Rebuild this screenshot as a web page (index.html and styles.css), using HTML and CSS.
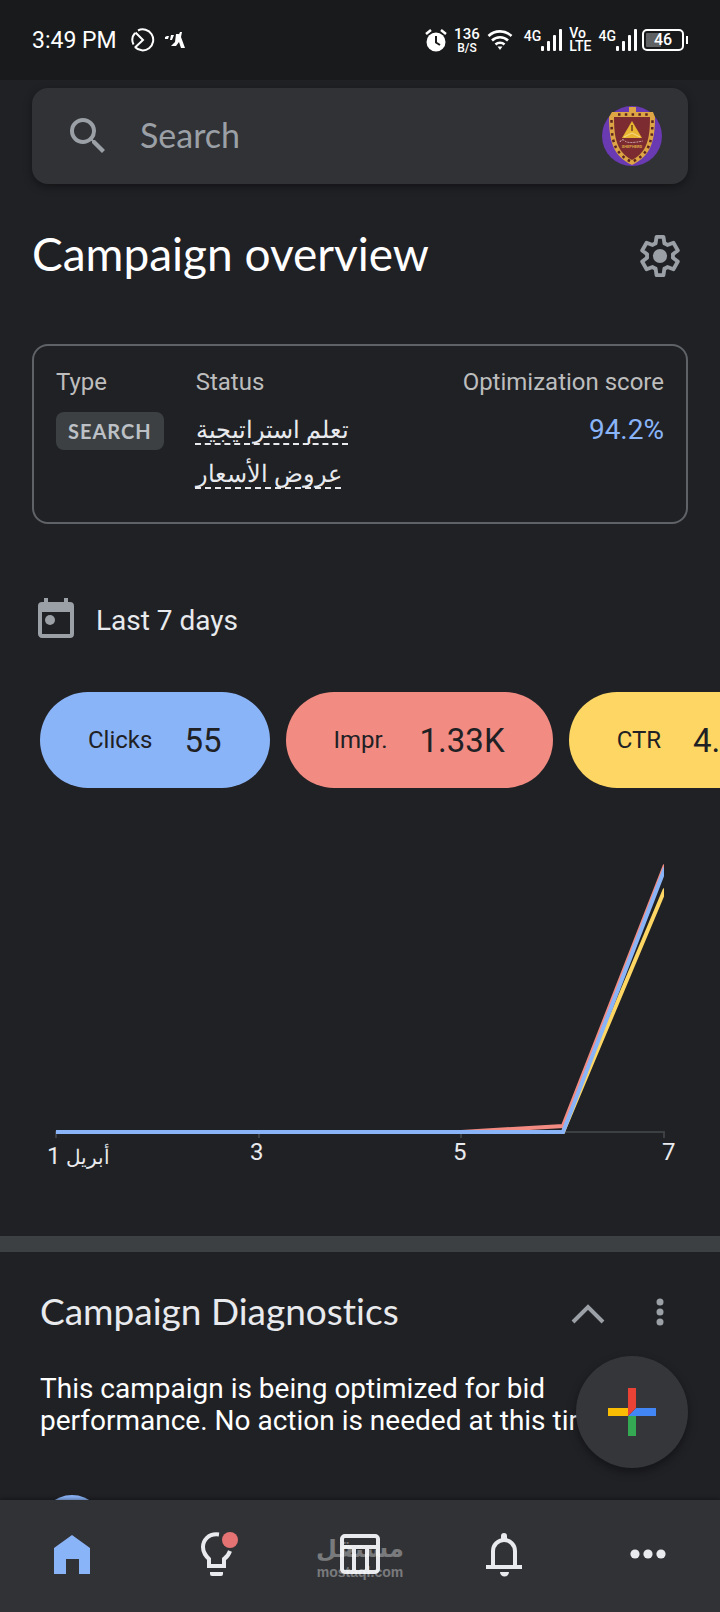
FILE: index.html
```html
<!DOCTYPE html>
<html lang="en">
<head>
    <meta charset="UTF-8">
    <meta name="viewport" content="width=device-width, initial-scale=1.0">
    <title>Campaign overview</title>
    <link rel="stylesheet" href="styles.css">
</head>
<body>

    <!-- Phone Status Bar -->
    <div class="status-bar">
        <span class="time">3:49 PM</span>
        <svg class="app-icon" width="24" height="24" viewBox="0 0 24 24" fill="none" stroke="#fff" stroke-width="2">
            <path d="M7 2.500a10.500 10.500 0 1 1-3 16.500M4 5a10.500 10.500 0 0 0-1.500 11.500M4.500 4.500l7.500 7.500-8 7.500"/>
        </svg>
        <svg width="20" height="16" viewBox="0 0 20 16" fill="#fff">
            <path d="M0 5l2-1h2L3 7H0zM6 3h3L7 8H5zM11 2h3l-4 12H6l4-4zM15 0h2l-1 5 4 11h-4l-2-6-3 4H9z"/>
        </svg>

        <div class="status-right">
            <svg width="22" height="24" viewBox="0 0 22 24">
                <circle cx="11" cy="14" r="9.500" fill="#fff"/>
                <path d="M1 6l5-4M21 6l-5-4" stroke="#fff" stroke-width="2.500"/>
                <path d="M11 8v6.500l4 2.500" stroke="#191a1c" stroke-width="2" fill="none"/>
            </svg>
            <div class="stack speed"><b>136</b><small>B/S</small></div>
            <svg class="wifi" width="26" height="22" viewBox="0 0 26 22" fill="none" stroke="#fff" stroke-width="2.600">
                <path d="M1.500 7a16.500 16.500 0 0 1 23 0M5 11.500a11.500 11.500 0 0 1 16 0M8.500 15.500a6.500 6.500 0 0 1 9 0"/>
                <path d="M10.500 17.500h5L13 21z" fill="#fff" stroke="none"/>
            </svg>
            <div class="signal">
                <span>4G</span>
                <svg width="21" height="22" viewBox="0 0 21 22" fill="#fff">
                    <rect x="0" y="17" width="3" height="5" rx="1"/><rect x="6" y="12" width="3" height="10" rx="1"/>
                    <rect x="12" y="6" width="3" height="16" rx="1"/><rect x="18" y="0" width="3" height="22" rx="1"/>
                </svg>
            </div>
            <div class="stack volte"><span>Vo</span><span>LTE</span></div>
            <div class="signal">
                <span>4G</span>
                <svg width="21" height="22" viewBox="0 0 21 22" fill="#fff">
                    <rect x="0" y="17" width="3" height="5" rx="1"/><rect x="6" y="12" width="3" height="10" rx="1"/>
                    <rect x="12" y="6" width="3" height="16" rx="1"/><rect x="18" y="0" width="3" height="22" rx="1"/>
                </svg>
            </div>
            <div class="battery">46</div>
        </div>
    </div>

    <main>
        <!-- Search -->
        <form class="search">
            <svg width="48" height="48" viewBox="0 0 24 24" fill="#9aa0a6">
                <path d="M15.500 14h-.79l-.28-.27A6.470 6.470 0 0 0 16 9.500 6.500 6.500 0 1 0 9.500 16c1.610 0 3.090-.59 4.230-1.570l.27.28v.79l5 4.990L20.490 19l-4.990-5zm-6 0C7.010 14 5 11.990 5 9.500S7.010 5 9.500 5 14 7.010 14 9.500 11.990 14 9.500 14z"/>
            </svg>
            <input type="text" placeholder="Search" aria-label="Search">
            <button type="button" class="avatar" aria-label="Account">
                <svg width="60" height="60" viewBox="0 0 60 60">
                    <circle cx="30" cy="30" r="30" fill="#6a3ab2"/>
                    <path d="M27 1h7v5h17l2 5c0 24-4 39-23 48C11 50 7 35 7 11l3-5h17z" fill="#dda544"/>
                    <path d="M12 11h36c0 22-3 35-18 43C15 46 12 33 12 11z" fill="#7c2c30"/>
                    <path d="M9.500 14c0 21 3 34 20.500 42 17.500-8 20.500-21 20.500-42" fill="none" stroke="#5b2320" stroke-width="2.500" stroke-dasharray="2.500 4"/>
                    <path d="M16 8.500h30" stroke="#5b2320" stroke-width="2.500" stroke-dasharray="2.500 4.300"/>
                    <path d="M30 15l10 17H20z" fill="#e9b632"/>
                    <path d="M30 19v6" stroke="#8a5a20" stroke-width="2"/>
                    <path d="M22 31l8-4 8 4" fill="none" stroke="#f5dc8c"/>
                    <path d="M18 36q2-4 5-1t18 0" fill="none" stroke="#d9b3bd" stroke-dasharray="2 1"/>
                    <text x="30" y="42" class="crest-text">SHEPHERD</text>
                </svg>
            </button>
        </form>

        <div class="title-row">
            <h1>Campaign overview</h1>
            <button type="button" aria-label="Settings">
                <svg width="46" height="46" viewBox="0 0 24 24" fill="none" stroke="#9aa0a6" stroke-width="2">
                    <path stroke-linejoin="round" d="M18.700 12.900c.1-.6.1-1.200 0-1.800l2.600-2-2.300-4-3.100 1.200c-.5-.4-1-.7-1.600-.9L13.800 2h-3.600l-.5 3.400c-.6.2-1.100.5-1.600.9L5 5.100l-2.300 4 2.600 2c-.1.6-.1 1.200 0 1.800l-2.600 2 2.300 4 3.100-1.200c.5.4 1 .7 1.600.9l.5 3.400h3.600l.5-3.400c.6-.2 1.100-.5 1.600-.9l3.100 1.200 2.300-4z"/>
                    <circle cx="12" cy="12" r="3.700" fill="#9aa0a6" stroke="none"/>
                </svg>
            </button>
        </div>

        <!-- Campaign Info -->
        <section class="info-card">
            <div>
                <h3>Type</h3>
                <span class="chip">SEARCH</span>
            </div>
            <div class="status-col">
                <h3>Status</h3>
                <a href="#" lang="ar">تعلم استراتيجية عروض الأسعار</a>
            </div>
            <div class="score-col">
                <h3>Optimization score</h3>
                <span class="score">94.2%</span>
            </div>
        </section>

        <button type="button" class="date-range">
            <svg width="48" height="48" viewBox="0 0 24 24" fill="#9aa0a6">
                <path fill-rule="evenodd" d="M19 4h-1V2h-2v2H8V2H6v2H5a2 2 0 0 0-2 2v14c0 1.100.9 2 2 2h14a2 2 0 0 0 2-2V6a2 2 0 0 0-2-2zm0 16H5V9h14z"/>
                <circle cx="9" cy="13" r="2.500"/>
            </svg>
            Last 7 days
        </button>

        <!-- Metrics -->
        <div class="metrics">
            <button type="button" class="metric clicks">Clicks <b>55</b></button>
            <button type="button" class="metric impr">Impr. <b>1.33K</b></button>
            <button type="button" class="metric ctr">CTR <b>4.14%</b></button>
        </div>

        <svg class="chart" viewBox="0 0 720 320" role="img" aria-label="Clicks, impressions and CTR by day">
            <defs><clipPath id="plot"><rect x="56" y="0" width="608" height="280"/></clipPath></defs>
            <path d="M56 278v-6h608v6M259 272v6M461 272v6" fill="none" stroke="#3c4043" stroke-width="2"/>
            <g fill="none" stroke-width="4" clip-path="url(#plot)">
                <path d="M56 272H563L665 29" stroke="#fdd663"/>
                <path d="M56 272H461L563 266L665 5" stroke="#f28b82"/>
                <path d="M56 272H563L665 8" stroke="#8ab4f8"/>
            </g>
            <g class="axis">
                <text x="47" y="304">1 <tspan class="month">أبريل</tspan></text>
                <text x="250" y="300">3</text>
                <text x="453" y="300">5</text>
                <text x="662" y="300">7</text>
            </g>
        </svg>

        <!-- Diagnostics -->
        <section class="diagnostics">
            <div class="diag-head">
                <h2>Campaign Diagnostics</h2>
                <button type="button" aria-label="Collapse">
                    <svg width="48" height="48" viewBox="0 0 48 48" fill="none" stroke="#9aa0a6" stroke-width="4"><path d="M9 34l15-15 15 15"/></svg>
                </button>
                <button type="button" aria-label="More">
                    <svg width="48" height="48" viewBox="0 0 48 48" fill="#9aa0a6"><circle cx="24" cy="14" r="3.500"/><circle cx="24" cy="24" r="3.500"/><circle cx="24" cy="34" r="3.500"/></svg>
                </button>
            </div>
            <p>This campaign is being optimized for bid performance. No action is needed at this time.</p>
            <div class="step"></div>
        </section>
    </main>

    <button type="button" class="fab" aria-label="Create">
        <svg width="48" height="48" viewBox="0 0 48 48">
            <path d="M0 20h20v8H0z" fill="#fbbc04"/>
            <path d="M20 28h8v20h-8z" fill="#34a853"/>
            <path d="M28 20h20v8H20z" fill="#4285f4"/>
            <path d="M20 0h8v20l-8 8z" fill="#ea4335"/>
        </svg>
    </button>

    <!-- Bottom Navigation -->
    <nav>
        <a href="#" aria-label="Overview">
            <svg width="48" height="48" viewBox="0 0 48 48"><path d="M24 5l18 13v26H31V29H18v15H6V18z" fill="#8ab4f8"/></svg>
        </a>
        <a href="#" aria-label="Recommendations">
            <svg width="48" height="48" viewBox="0 0 48 48" fill="none" stroke="#e8eaed" stroke-width="4">
                <path d="M27 4.500C16 3 11 11 11 17c0 6 3 9 6 12v7h15v-7c3-2 5-5 6-8"/>
                <path d="M18 42h13v2a2 2 0 0 1-2 2h-9a2 2 0 0 1-2-2z" fill="#e8eaed" stroke="none"/>
                <circle cx="38" cy="10" r="8" fill="#e57373" stroke="none"/>
            </svg>
        </a>
        <a href="#" aria-label="Campaigns">
            <svg width="48" height="48" viewBox="0 0 48 48" fill="none" stroke="#e8eaed" stroke-width="4">
                <rect x="6" y="6" width="36" height="36" rx="3"/><path d="M6 17h36M18 17v25M31 17v25"/>
            </svg>
        </a>
        <a href="#" aria-label="Notifications">
            <svg width="48" height="48" viewBox="0 0 48 48" fill="none" stroke="#e8eaed" stroke-width="4">
                <path d="M13 37V21a11 11 0 0 1 22 0v16M6 37h36"/>
                <path d="M20 42h9a4.500 4.500 0 0 1-9 0zM21 9V6a3 3 0 0 1 6 0v3z" fill="#e8eaed" stroke="none"/>
            </svg>
        </a>
        <a href="#" aria-label="More">
            <svg width="48" height="48" viewBox="0 0 48 48" fill="#e8eaed"><circle cx="11" cy="24" r="4.600"/><circle cx="24" cy="24" r="4.600"/><circle cx="37" cy="24" r="4.600"/></svg>
        </a>
        <div class="watermark">
            <span lang="ar">مستقل</span>
            <span>mostaql.com</span>
        </div>
    </nav>

</body>
</html>
```
FILE: styles.css
```css
/* General Styles */
* { box-sizing: border-box; }
body { height: 100vh; margin: 0; display: flex; flex-direction: column; position: relative; overflow: hidden;
       background: #202125; color: #e8eaed; font-family: Roboto, "Noto Sans", sans-serif; }
button { padding: 0; border: none; background: none; color: inherit; font: inherit; cursor: pointer; }
svg { display: block; flex-shrink: 0; }
h1, h2, h3, p { margin: 0; font-weight: 400; }
h1, h2 { font-family: Lato, sans-serif; font-variant-ligatures: none; }

/* Status bar */
.status-bar { flex-shrink: 0; height: 80px; padding: 0 32px; display: flex; align-items: center; background: #191a1c; color: #fff; }
.time { font-size: 23px; line-height: 28px; padding-top: 2px; }
.app-icon { margin: 0 10px 0 14px; }
.status-right { display: flex; align-items: center; gap: 7px; margin-left: auto; }
.stack { display: flex; flex-direction: column; align-items: center; font-weight: 500; }
.speed b { font-size: 15px; line-height: 15px; font-weight: 500; }
.speed small { font-size: 12px; line-height: 12px; }
.volte { font-size: 14px; line-height: 13px; align-items: flex-start; }
.wifi { margin-right: 4px; }
.signal { display: flex; align-items: flex-start; font-size: 14px; line-height: 14px; font-weight: 500; }
.battery { position: relative; width: 42px; height: 22px; border: 2px solid #fff; border-radius: 5px; margin-right: 4px; margin-left: -2px;
           background: linear-gradient(90deg, #606163 45%, transparent 45%) content-box; padding: 2px;
           font-size: 16px; line-height: 14px; font-weight: 500; text-align: center; }
.battery::after { content: ""; position: absolute; right: -6px; top: 5px; width: 2px; height: 8px; background: #fff; }

/* Search */
main { flex: 1; min-height: 0; overflow: hidden; padding-top: 8px; }
.search { display: flex; align-items: center; height: 96px; margin: 0 32px; padding: 0 26px 0 32px; border-radius: 16px;
          background: #313236; box-shadow: 0 3px 8px rgba(0, 0, 0, 0.4); }
.search input { flex: 1; min-width: 0; margin-left: 28px; padding: 0 0 4px; border: none; outline: none; background: none;
                color: #e8eaed; font-family: Lato, sans-serif; font-size: 34px; }
.search input::placeholder { color: #9aa0a6; opacity: 1; }
.crest-text { font: bold 4px Roboto, sans-serif; fill: #dda544; text-anchor: middle; }

/* Title */
.title-row { display: flex; align-items: center; justify-content: space-between; margin: 40px 37px 56px 32px; height: 64px; }
h1 { font-size: 46px; line-height: 56px; padding-bottom: 4px; color: #fff; }

/* Info card */
.info-card { display: flex; height: 180px; margin: 0 32px; padding: 20px 22px; border: 2px solid #5f6368; border-radius: 16px; }
h3 { font-size: 24px; line-height: 32px; color: #bdbdbd; }
.chip { display: block; margin-top: 14px; padding: 0 12px; border-radius: 8px; background: #3c4043; color: #bdc1c6;
        font: bold 20px/38px Lato, sans-serif; letter-spacing: 1px; }
.status-col { width: 200px; margin-left: 32px; }
.status-col a { display: block; margin-top: 10px; color: #e8eaed; font-size: 24px; line-height: 44px;
                text-decoration: underline dashed 2px; text-underline-offset: 5px; text-decoration-skip-ink: none; }
.score-col { margin-left: auto; text-align: right; }
.score { display: block; margin-top: 16px; font-size: 28px; line-height: 32px; color: #8ab4f8; }

/* Metrics */
.date-range { display: flex; align-items: flex-end; gap: 16px; margin: 70px 32px 50px; font-size: 28px; line-height: 42px; }
.metrics { display: flex; gap: 16px; padding-left: 40px; overflow: hidden; }
.metric { display: flex; flex-shrink: 0; align-items: center; gap: 32px; height: 96px; padding: 0 48px; border-radius: 48px;
          color: #202124; font-size: 24px; }
.metric b { font-size: 33px; font-weight: 400; }
.clicks { background: #8ab4f8; }
.impr { background: #f28b82; }
.ctr { background: #fdd663; }

/* Chart */
.chart { width: 100%; margin-top: 72px; }
.axis { font-size: 24px; fill: #e8eaed; }
.month { font-size: 20px; }

/* Diagnostics */
.diagnostics { margin-top: 56px; padding: 36px 36px 0 40px; border-top: 16px solid #3c4043; }
.diag-head { display: flex; align-items: center; gap: 24px; height: 48px; }
h2 { flex: 1; font-size: 37px; line-height: 44px; padding-bottom: 2px; }
.diagnostics p { margin-top: 37px; font-size: 28px; line-height: 32px; color: #fff; }
.step { width: 64px; height: 64px; margin-top: 58px; border-radius: 50%; background: #8ab4f8; }

/* Floating button */
.fab { position: absolute; right: 32px; bottom: 144px; display: flex; align-items: center; justify-content: center;
       width: 112px; height: 112px; border-radius: 50%; background: #353639; box-shadow: 0 4px 10px rgba(0, 0, 0, 0.4); }

/* Bottom navigation */
nav { position: relative; flex-shrink: 0; display: flex; align-items: center; height: 112px; padding-bottom: 4px;
      background: #313236; box-shadow: 0 -1px 4px rgba(0, 0, 0, 0.4); }
nav a { flex: 1; display: flex; justify-content: center; }
.watermark { position: absolute; left: 0; right: 0; top: 34px; display: flex; flex-direction: column; align-items: center;
             color: #fff; opacity: 0.35; font: bold 14px/16px "Liberation Sans", sans-serif; pointer-events: none; }
.watermark span:first-child { font: bold 24px/30px "DejaVu Sans", sans-serif; }
```
